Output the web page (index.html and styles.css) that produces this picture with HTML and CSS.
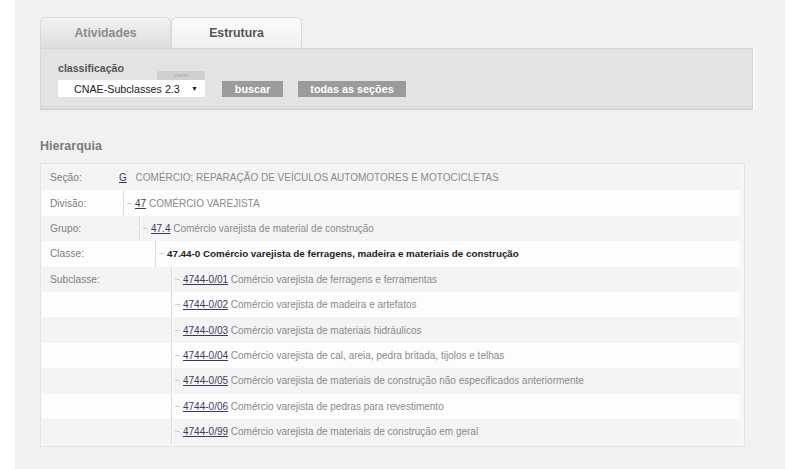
FILE: index.html
```html
<!DOCTYPE html>
<html lang="pt">
<head>
<meta charset="utf-8">
<title>Estrutura CNAE</title>
<link rel="stylesheet" href="styles.css">
</head>
<body>
<div class="page">
  <div class="tabs">
    <div class="tab">Atividades</div>
    <div class="tab active">Estrutura</div>
  </div>
  <div class="panel">
    <div class="field">
      <div class="field-top">
        <span class="field-label">classificação</span>
        <span class="mini">classe</span>
      </div>
      <div class="select"><span>CNAE-Subclasses 2.3</span><span class="arrow">▼</span></div>
    </div>
    <button class="btn btn-buscar">buscar</button>
    <button class="btn btn-todas">todas as seções</button>
  </div>

  <h2 class="title">Hierarquia</h2>

  <div class="tree">
    <div class="row odd">
      <div class="lbl">Seção:</div>
      <div class="val"><span class="txt"><a class="code code-g" href="#">G</a> COMÉRCIO; REPARAÇÃO DE VEÍCULOS AUTOMOTORES E MOTOCICLETAS</span></div>
    </div>
    <div class="row">
      <div class="lbl">Divisão:</div>
      <div class="val"><span class="ind"><span class="tick"></span></span><span class="txt"><a class="code" href="#">47</a> COMÉRCIO VAREJISTA</span></div>
    </div>
    <div class="row odd">
      <div class="lbl">Grupo:</div>
      <div class="val"><span class="sp"></span><span class="ind"><span class="tick"></span></span><span class="txt"><a class="code" href="#">47.4</a> Comércio varejista de material de construção</span></div>
    </div>
    <div class="row">
      <div class="lbl">Classe:</div>
      <div class="val"><span class="sp"></span><span class="sp"></span><span class="ind"><span class="tick"></span></span><span class="txt strong">47.44-0 Comércio varejista de ferragens, madeira e materiais de construção</span></div>
    </div>
    <div class="row odd">
      <div class="lbl">Subclasse:</div>
      <div class="val"><span class="sp"></span><span class="sp"></span><span class="sp"></span><span class="ind"><span class="tick"></span></span><span class="txt"><a class="code" href="#">4744-0/01</a> Comércio varejista de ferragens e ferramentas</span></div>
    </div>
    <div class="row">
      <div class="lbl"></div>
      <div class="val"><span class="sp"></span><span class="sp"></span><span class="sp"></span><span class="ind"><span class="tick"></span></span><span class="txt"><a class="code" href="#">4744-0/02</a> Comércio varejista de madeira e artefatos</span></div>
    </div>
    <div class="row odd">
      <div class="lbl"></div>
      <div class="val"><span class="sp"></span><span class="sp"></span><span class="sp"></span><span class="ind"><span class="tick"></span></span><span class="txt"><a class="code" href="#">4744-0/03</a> Comércio varejista de materiais hidráulicos</span></div>
    </div>
    <div class="row">
      <div class="lbl"></div>
      <div class="val"><span class="sp"></span><span class="sp"></span><span class="sp"></span><span class="ind"><span class="tick"></span></span><span class="txt"><a class="code" href="#">4744-0/04</a> Comércio varejista de cal, areia, pedra britada, tijolos e telhas</span></div>
    </div>
    <div class="row odd">
      <div class="lbl"></div>
      <div class="val"><span class="sp"></span><span class="sp"></span><span class="sp"></span><span class="ind"><span class="tick"></span></span><span class="txt"><a class="code" href="#">4744-0/05</a> Comércio varejista de materiais de construção não especificados anteriormente</span></div>
    </div>
    <div class="row">
      <div class="lbl"></div>
      <div class="val"><span class="sp"></span><span class="sp"></span><span class="sp"></span><span class="ind"><span class="tick"></span></span><span class="txt"><a class="code" href="#">4744-0/06</a> Comércio varejista de pedras para revestimento</span></div>
    </div>
    <div class="row odd">
      <div class="lbl"></div>
      <div class="val"><span class="sp"></span><span class="sp"></span><span class="sp"></span><span class="ind"><span class="tick"></span></span><span class="txt"><a class="code" href="#">4744-0/99</a> Comércio varejista de materiais de construção em geral</span></div>
    </div>
  </div>
</div>
</body>
</html>
```

FILE: styles.css
```css
html, body {
  margin: 0;
  padding: 0;
  background: #ffffff;
}

body {
  font-family: "Liberation Sans", Arial, sans-serif;
}

.page {
  margin-left: 15px;
  width: 770px;
  height: 469px;
  box-sizing: border-box;
  padding: 17px 0 0 25px;
  background: #f1f1f1;
}

/* Tabs */
.tabs {
  display: flex;
  height: 31px;
}

.tab {
  width: 131px;
  height: 31px;
  box-sizing: border-box;
  border: 1px solid #d9d9d9;
  border-bottom: none;
  border-radius: 6px 6px 0 0;
  background: linear-gradient(#f2f2f2, #dedede);
  color: #8c8c8c;
  font-weight: bold;
  font-size: 12.3px;
  display: flex;
  align-items: center;
  justify-content: center;
  box-shadow: inset 0 1px 0 #fafafa;
}

.tab.active {
  background: linear-gradient(#fbfbfb, #f0f0f0);
  color: #555555;
}

/* Search panel */
.panel {
  width: 713px;
  box-sizing: border-box;
  border: 1px solid #d6d6d6;
  border-bottom-color: #cccccc;
  background: #e3e3e3;
  box-shadow: inset 0 -3px 0 #dcdcdc, 2px 0 0 #f8f8f8;
  padding: 12px 0 12px 17px;
  display: flex;
  align-items: flex-end;
}

.field {
  width: 147px;
  display: flex;
  flex-direction: column;
}

.field-top {
  height: 19px;
  display: flex;
  justify-content: space-between;
}

.field-label {
  align-self: flex-start;
  font-size: 10.6px;
  font-weight: bold;
  color: #555555;
  line-height: 14px;
}

.mini {
  align-self: flex-end;
  width: 48px;
  height: 9px;
  background: #d0d0d0;
  border-radius: 2px 2px 0 0;
  font-size: 5px;
  line-height: 9px;
  color: #a8a8a8;
  text-align: center;
}

.select {
  height: 17px;
  background: #ffffff;
  display: flex;
  align-items: center;
  justify-content: space-between;
  padding: 0 7px 0 16px;
  font-size: 10.7px;
  color: #222222;
}

.arrow {
  font-size: 7px;
  color: #222222;
}

.btn {
  height: 16px;
  border: none;
  margin: 0;
  padding: 0;
  background: #9b9b9b;
  color: #ffffff;
  font-family: "Liberation Sans", Arial, sans-serif;
  font-weight: bold;
  font-size: 10.8px;
  line-height: 16px;
  text-align: center;
}

.btn-buscar {
  width: 61px;
  margin-left: 17px;
}

.btn-todas {
  width: 108px;
  margin-left: 15px;
}

/* Title */
.title {
  margin: 29px 0 10px 0;
  font-size: 12.5px;
  line-height: 14px;
  font-weight: bold;
  color: #7c7c7c;
}

/* Tree */
.tree {
  width: 705px;
  box-sizing: border-box;
  border: 1px solid #e4e4e4;
  background: #f7f7f7;
  padding: 1px 4px 2px 1px;
}

.row {
  display: flex;
  height: 25.4px;
  background: #fdfdfd;
}

.row.odd {
  background: #f4f4f4;
}

.lbl {
  width: 77px;
  flex: none;
  box-sizing: border-box;
  padding-left: 8px;
  display: flex;
  align-items: center;
  font-size: 10.2px;
  color: #7e7e7e;
}

.val {
  display: flex;
  align-items: stretch;
  flex: 1;
}

.sp {
  width: 16px;
  flex: none;
}

.ind {
  width: 11px;
  margin-left: 4px;
  flex: none;
  border-left: 1px solid #dcdcdc;
  box-shadow: 1px 0 0 #ffffff inset;
  display: flex;
  align-items: center;
}

.tick {
  width: 5px;
  height: 1px;
  margin-left: 3px;
  background: #cfcfcf;
}

.txt {
  align-self: center;
  font-size: 10px;
  color: #8a8a8a;
  white-space: nowrap;
}

.txt.strong {
  font-weight: bold;
  color: #222222;
  font-size: 9.8px;
}

.code {
  color: #3b3b5e;
  text-decoration: underline;
}

.code-g {
  margin-right: 6px;
}
```
